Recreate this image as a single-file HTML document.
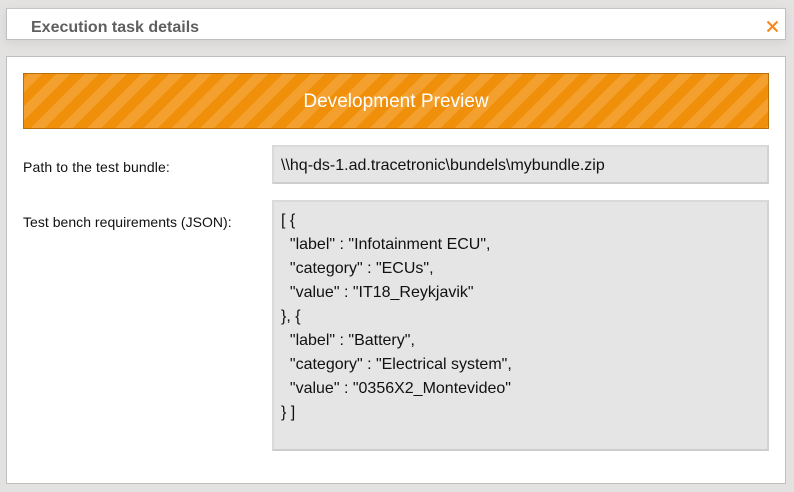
<!DOCTYPE html>
<html>
<head>
<meta charset="utf-8">
<style>
html,body{margin:0;padding:0}
body{width:794px;height:492px;background:#e4e2e1;position:relative;overflow:hidden;font-family:"Liberation Sans",sans-serif;color:#000}
.a{position:absolute;box-sizing:border-box}
#head{left:6px;top:8px;width:780px;height:32px;background:#fff;border:1px solid #bebebe;border-top-color:#c4c4c4;box-shadow:0 3px 10px rgba(0,0,0,.08)}
#title{left:31px;top:18px;font-size:16px;font-weight:bold;color:#5f5f5f;line-height:19px;white-space:nowrap}
#body{left:6px;top:56px;width:780px;height:428px;background:#fff;border:1px solid #bebebe}
#banner{left:23px;top:73px;width:746px;height:56px;border:1px solid #b86f0a;background:repeating-linear-gradient(135deg,#f0900a 0,#f0900a 2.83px,#f3a02f 2.83px,#f3a02f 12.83px,#f0900a 12.83px,#f0900a 20px);color:#fff;font-size:19px;line-height:56px;text-align:center;letter-spacing:.03px}
.l{left:23px;font-size:14px;line-height:16px;white-space:nowrap;color:#111}
.f{left:272px;width:497px;background:#e5e5e5;border:2px solid #dadada;border-bottom-color:#cdcdcd;border-right-color:#d2d2d2;font-size:16px;color:#111}
#f1{top:145px;height:39px;line-height:37px;padding-left:7px;white-space:nowrap}
#f2{top:200px;height:251px;padding:7px 0 0 7px;line-height:24px;white-space:pre}
</style>
</head>
<body>
<div class="a" id="head"></div>
<div class="a" id="title">Execution task details</div>
<svg class="a" style="left:766px;top:19.500px" width="13" height="13" viewBox="0 0 13 13"><path d="M1.500 1.500L11.500 11.500M11.500 1.500L1.500 11.500" stroke="#f5871f" stroke-width="2.100" fill="none"/></svg>
<div class="a" id="body"></div>
<div class="a" id="banner">Development Preview</div>
<div class="a l" style="top:159px;letter-spacing:.12px">Path to the test bundle:</div>
<div class="a f" id="f1">\\hq-ds-1.ad.tracetronic\bundels\mybundle.zip</div>
<div class="a l" style="top:214px;letter-spacing:.03px">Test bench requirements (JSON):</div>
<div class="a f" id="f2">[ {
  "label" : "Infotainment ECU",
  "category" : "ECUs",
  "value" : "IT18_Reykjavik"
}, {
  "label" : "Battery",
  "category" : "Electrical system",
  "value" : "0356X2_Montevideo"
} ]</div>
</body>
</html>
